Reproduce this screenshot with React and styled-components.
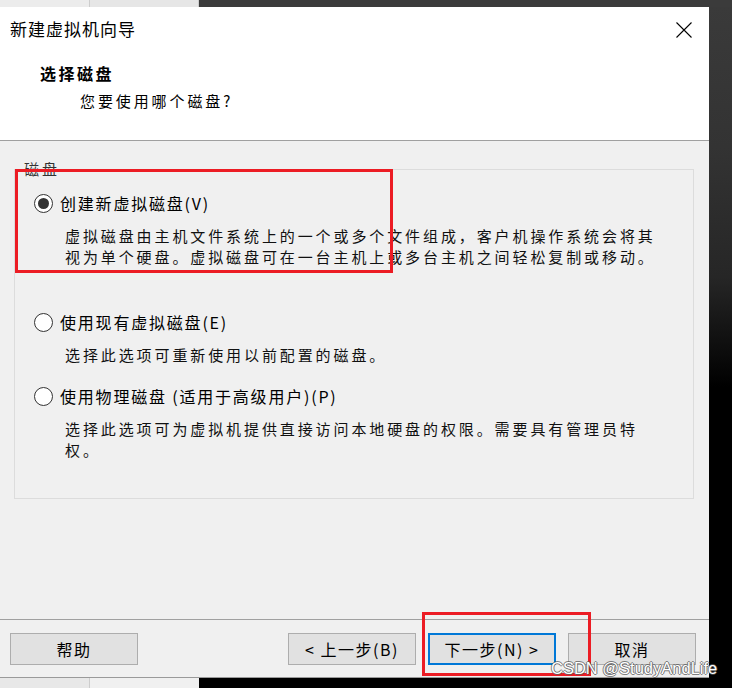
import styled, { createGlobalStyle } from "styled-components";

const GlobalStyle = createGlobalStyle`
    html, body {
        margin: 0;
        padding: 0;
        background: #000;
    }
    * {
        box-sizing: border-box;
    }
`

const options = [
    {
        label: '创建新虚拟磁盘(V)',
        lines: ['虚拟磁盘由主机文件系统上的一个或多个文件组成，客户机操作系统会将其', '视为单个硬盘。虚拟磁盘可在一台主机上或多台主机之间轻松复制或移动。'],
        checked: true,
        space: 0,
    },
    {
        label: '使用现有虚拟磁盘(E)',
        lines: ['选择此选项可重新使用以前配置的磁盘。'],
        space: 44,
    },
    {
        label: '使用物理磁盘 (适用于高级用户)(P)',
        lines: ['选择此选项可为虚拟机提供直接访问本地硬盘的权限。需要具有管理员特', '权。'],
        space: 20,
    },
]

const App = () => {
    return (
        <>
            <GlobalStyle />
            <Screen>
                <Strip $h={7}>
                    <StripPane $w={90} $bg="#ececec" $line />
                    <StripPane $w={109} $bg="#e6e6e6" $line />
                    <StripFill $bg="#3b3b3b" />
                </Strip>
                <Middle>
                    <Dialog>
                        <Header>
                            <TitleBar>
                                <Title>新建虚拟机向导</Title>
                                <CloseButton aria-label="关闭">
                                    <svg width="16" height="16" viewBox="0 0 16 16">
                                        <path d="M0.5 0.5 L15.5 15.5 M15.5 0.5 L0.5 15.5" stroke="#000" strokeWidth="1.1" fill="none" />
                                    </svg>
                                </CloseButton>
                            </TitleBar>
                            <PageTitle>选择磁盘</PageTitle>
                            <PageSub>您要使用哪个磁盘?</PageSub>
                        </Header>
                        <Body>
                            <Group>
                                <Legend>磁盘</Legend>
                                {options.map((o) => (
                                    <Option key={o.label} $space={o.space}>
                                        <RadioRow>
                                            <Radio $checked={o.checked} />
                                            <RadioLabel>{o.label}</RadioLabel>
                                        </RadioRow>
                                        <Desc>
                                            {o.lines.map((l) => (
                                                <div key={l}>{l}</div>
                                            ))}
                                        </Desc>
                                    </Option>
                                ))}
                            </Group>
                        </Body>
                        <Footer>
                            <Button>帮助</Button>
                            <NavButtons>
                                <Button>&lt; 上一步(B)</Button>
                                <Button $primary>下一步(N) &gt;</Button>
                                <Button>取消</Button>
                            </NavButtons>
                        </Footer>
                    </Dialog>
                    <DesktopEdge />
                </Middle>
                <Strip $h={10}>
                    <StripPane $w={90} $bg="#e8e8e8" $line />
                    <StripPane $w={109} $bg="#f0f0f0" />
                    <StripFill $bg="#000" />
                </Strip>
                <Annotation $x={15} $y={169} $w={378} $h={104} />
                <Annotation $x={422} $y={612} $w={169} $h={64} />
                <Watermark>CSDN @StudyAndLife</Watermark>
            </Screen>
        </>
    )
}

export default App;

const cjk = `"Noto Sans CJK SC", "Noto Sans", sans-serif`

const Screen = styled.div`
    position: relative;
    width: 732px;
    height: 688px;
    overflow: hidden;
    display: flex;
    flex-direction: column;
    font-family: ${cjk};
    color: #000;
`
const Strip = styled.div`
    height: ${(p) => p.$h}px;
    display: flex;
    flex: none;
`
const StripPane = styled.div`
    width: ${(p) => p.$w}px;
    background: ${(p) => p.$bg};
    border-right: ${(p) => (p.$line ? '1px solid #cdcdcd' : 'none')};
`
const StripFill = styled.div`
    flex: 1;
    background: ${(p) => p.$bg};
`
const Middle = styled.div`
    display: flex;
    height: 671px;
    flex: none;
`
const Dialog = styled.div`
    width: 709px;
    height: 100%;
    display: flex;
    flex-direction: column;
    background: #f0f0f0;
    border-bottom: 1px solid #9a9a9a;
`
const DesktopEdge = styled.div`
    flex: 1;
    background: linear-gradient(to bottom, #3a3a3a 0, #333 140px, #262626 270px, #000 380px);
`
const Header = styled.header`
    height: 134px;
    background: #fff;
    border-bottom: 1px solid #a0a0a0;
    flex: none;
`
const TitleBar = styled.div`
    height: 44px;
    display: flex;
    align-items: center;
    justify-content: space-between;
    padding: 0 17px 0 10px;
`
const Title = styled.div`
    font-size: 17px;
    letter-spacing: 1px;
    line-height: 44px;
`
const CloseButton = styled.button`
    width: 16px;
    height: 16px;
    padding: 0;
    border: none;
    background: none;
    display: flex;
    margin-top: 1px;
`
const PageTitle = styled.div`
    margin: 11px 0 0 40px;
    font-size: 16px;
    font-weight: 700;
    letter-spacing: 2.5px;
    line-height: 22px;
`
const PageSub = styled.div`
    margin: 6px 0 0 80px;
    font-size: 15px;
    letter-spacing: 2.9px;
    line-height: 22px;
`
const Body = styled.main`
    flex: 1;
    padding: 17px 15px 0 14px;
`
const Group = styled.fieldset`
    margin: 0;
    height: 341px;
    padding: 12px 0 0 0;
    border: 1px solid #dcdcdc;
    min-width: 0;
`
const Legend = styled.legend`
    margin-left: 8px;
    padding: 0 1px;
    font-size: 15px;
    letter-spacing: 2.9px;
    line-height: 22px;
    color: #333;
`
const Option = styled.div`
    margin: ${(p) => p.$space}px 0 0 19px;
`
const RadioRow = styled.div`
    display: flex;
    align-items: center;
    gap: 7px;
    height: 22px;
`
const Radio = styled.span`
    width: 19px;
    height: 19px;
    border-radius: 50%;
    border: 1px solid #333;
    background: #fff;
    display: flex;
    align-items: center;
    justify-content: center;
    &::after {
        content: '';
        width: 11px;
        height: 11px;
        border-radius: 50%;
        background: #333;
        display: ${(p) => (p.$checked ? 'block' : 'none')};
    }
`
const RadioLabel = styled.span`
    font-size: 16px;
    letter-spacing: 1.8px;
    line-height: 22px;
    white-space: nowrap;
`
const Desc = styled.div`
    margin: 11px 0 0 31px;
    font-size: 15px;
    letter-spacing: 2.9px;
    line-height: 21px;
    white-space: nowrap;
    color: #111;
`
const Footer = styled.footer`
    flex: none;
    height: 58px;
    border-top: 1px solid #a0a0a0;
    display: flex;
    justify-content: space-between;
    padding: 13px 13px 0 10px;
`
const NavButtons = styled.div`
    display: flex;
    gap: 12px;
`
const Button = styled.button`
    width: 128px;
    height: 32px;
    background: #e1e1e1;
    border: ${(p) => (p.$primary ? '2px solid #0078d7' : '1px solid #adadad')};
    font-family: ${cjk};
    font-size: 16px;
    letter-spacing: 1.5px;
    color: #000;
    padding: 0;
    cursor: pointer;
`
const Annotation = styled.div`
    position: absolute;
    left: ${(p) => p.$x}px;
    top: ${(p) => p.$y}px;
    width: ${(p) => p.$w}px;
    height: ${(p) => p.$h}px;
    border: 3px solid #ec1c24;
    pointer-events: none;
`
const Watermark = styled.div`
    position: absolute;
    left: 551px;
    top: 657px;
    font-family: "Liberation Sans", Arial, sans-serif;
    font-size: 16.5px;
    line-height: 22px;
    color: #fff;
    text-shadow: 1px 0 0 rgba(90, 90, 90, 0.75), -1px 0 0 rgba(90, 90, 90, 0.75), 0 1px 0 rgba(90, 90, 90, 0.75), 0 -1px 0 rgba(90, 90, 90, 0.75);
    white-space: nowrap;
    pointer-events: none;
`
